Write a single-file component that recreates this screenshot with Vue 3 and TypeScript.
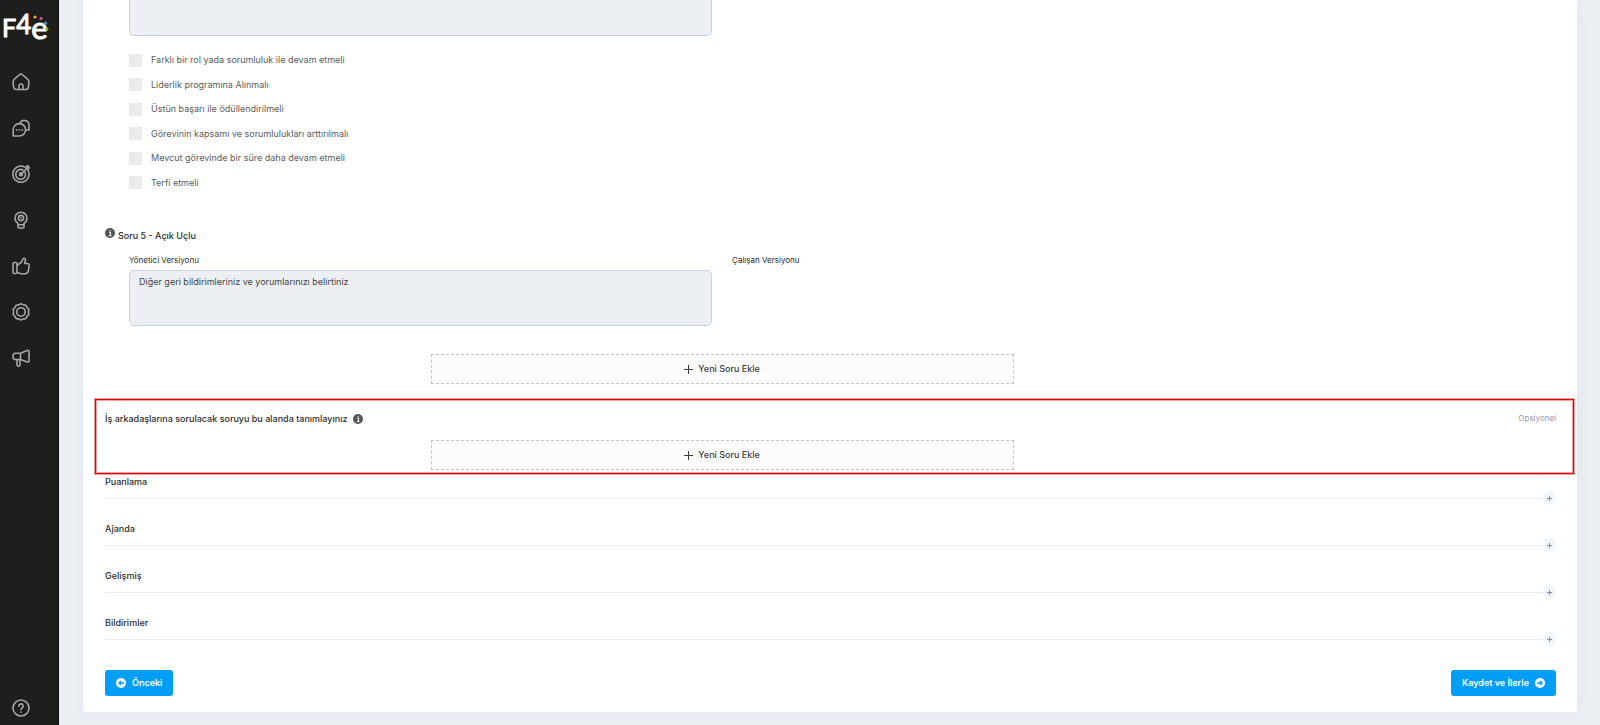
<script setup lang="ts">
import { ref } from 'vue'

interface NavItem {
  id: string
  label: string
}

interface Option {
  id: string
  label: string
}

const navItems: NavItem[] = [
  { id: 'home', label: 'Ana Sayfa' },
  { id: 'chat', label: 'Görüşmeler' },
  { id: 'target', label: 'Hedefler' },
  { id: 'idea', label: 'Gelişim' },
  { id: 'like', label: 'Takdir' },
  { id: 'badge', label: 'Rozetler' },
  { id: 'announce', label: 'Duyurular' },
]

const options: Option[] = [
  { id: 'role', label: 'Farklı bir rol yada sorumluluk ile devam etmeli' },
  { id: 'leadership', label: 'Liderlik programına Alınmalı' },
  { id: 'reward', label: 'Üstün başarı ile ödüllendirilmeli' },
  { id: 'scope', label: 'Görevinin kapsamı ve sorumlulukları arttırılmalı' },
  { id: 'continue', label: 'Mevcut görevinde bir süre daha devam etmeli' },
  { id: 'promotion', label: 'Terfi etmeli' },
]

const sections: string[] = ['Puanlama', 'Ajanda', 'Gelişmiş', 'Bildirimler']

const previousQuestion = ref('')
const openQuestion = ref('Diğer geri bildirimleriniz ve yorumlarınızı belirtiniz')
const selected = ref<string[]>([])
</script>

<template>
  <div class="layout">
    <aside class="sidebar">
      <a href="#" class="logo" aria-label="F4e">
        <span class="logo-f">F</span><span class="logo-4">4</span><span class="logo-e">e</span>
        <svg class="logo-dots" width="18" height="18" viewBox="0 0 18 18" aria-hidden="true">
          <circle cx="4" cy="3" r="1.600" fill="#f5a623" />
          <circle cx="10" cy="4.500" r="1.600" fill="#e0559b" />
          <circle cx="14.500" cy="9.200" r="1.600" fill="#4a90c8" />
          <circle cx="16" cy="15" r="1.600" fill="#6fb92c" />
        </svg>
      </a>
      <nav class="nav" aria-label="Menü">
        <a v-for="item in navItems" :key="item.id" href="#" class="nav-link" :aria-label="item.label">
          <svg class="nav-icon" viewBox="0 0 18 18">
            <template v-if="item.id === 'home'">
              <path d="M3.200 5.400 7.800 1.500q1.200-.9 2.400 0l4.600 3.900Q17 7 17 9l-.6 5q-.3 2.500-2.600 2.500H4.200Q1.900 16.500 1.600 14L1 9q0-2 2.200-3.600Z" />
              <path d="M7 16.500V13a2 2 0 0 1 4 0v3.500" />
            </template>
            <template v-else-if="item.id === 'chat'">
              <path d="M1.200 17V11A6.200 6.200 0 1 1 7.400 17Z" />
              <path d="M8 4.200A4.700 4.700 0 0 1 17 5.800V11H13.800" />
              <path d="M4.500 11h.4M7.300 11h.4M10.100 11h.4" />
            </template>
            <template v-else-if="item.id === 'target'">
              <path d="M12.600 2A8.100 8.100 0 1 0 16 5.300" />
              <path d="M10.900 5A4.900 4.900 0 1 0 13 7.100" />
              <circle cx="9" cy="9.200" r="1.500" />
              <path d="m9 9.200 5-5M14 4.200V2l2-1.500v2h1.600L16 4.200Z" />
            </template>
            <template v-else-if="item.id === 'idea'">
              <path d="M6 12.400a6 6 0 1 1 6 0V16q0 1-1 1H7q-1 0-1-1ZM6 13.800h6" />
              <circle cx="9" cy="7" r="2.600" />
              <path d="M9 6.900v.2" />
            </template>
            <template v-else-if="item.id === 'like'">
              <rect x="1" y="5.500" width="4" height="11" rx="1.300" />
              <path d="M5 8.500 9.500 5l1.700-3.300q1-1 2 .1.600 1-.1 2.700L12.600 6.500H15q2.300 0 2.200 2.200l-.8 5q-.5 3-3.400 3H8.500L5 15.200" />
            </template>
            <template v-else-if="item.id === 'badge'">
              <path d="m9 .8 2.300 1.100 2.600.3 1.100 2.300 1.900 1.800-.5 2.600.5 2.600-1.900 1.800-1.100 2.300-2.600.3L9 17l-2.300-1.100-2.600-.3L3 13.300l-1.900-1.800.5-2.600-.5-2.600L3 4.500l1.100-2.300 2.600-.3Z" />
              <circle cx="9" cy="8.900" r="4.200" />
            </template>
            <template v-else>
              <path d="M8.500 4.200 15.200 1.500q1.800-.4 1.800 1v9.400q0 1.400-1.800 1l-6.700-2.300H3.500q-2.500 0-2.500-2.500v-1.400q0-2.500 2.500-2.500ZM8.500 4.200v6.400" />
              <path d="M5 10.600V16q0 1.200 1.500 1.200T8 16v-5.200" />
            </template>
          </svg>
        </a>
      </nav>
      <a href="#" class="nav-link help" aria-label="Yardım">
        <svg class="nav-icon" viewBox="0 0 18 18">
          <circle cx="9" cy="9" r="8" />
          <path d="M6.800 7.200a2.200 2.200 0 1 1 3.300 1.800Q9 9.600 9 10.800M9 13v.3" />
        </svg>
      </a>
    </aside>

    <main class="content">
      <form class="card" @submit.prevent>
        <div class="questions">
          <div class="columns">
            <textarea v-model="previousQuestion" class="answer clipped" aria-label="Soru 4" readonly></textarea>
          </div>

          <div class="options">
            <label v-for="option in options" :key="option.id" class="option">
              <input v-model="selected" type="checkbox" class="box" :value="option.id" />
              <span>{{ option.label }}</span>
            </label>
          </div>
        </div>

        <h2 class="question-title">
          <svg class="info" viewBox="0 0 10 10" aria-hidden="true">
            <circle cx="5" cy="5" r="5" fill="#555" />
            <path d="M4 4.300h1.500v3M3.800 7.500h2.600M4.600 2.500h1" stroke="#fff" stroke-width="1.100" fill="none" />
          </svg>
          Soru 5 - Açık Uçlu
        </h2>

        <div class="questions">
          <div class="columns">
            <div class="version">
              <label for="manager-version">Yönetici Versiyonu</label>
              <textarea id="manager-version" v-model="openQuestion" class="answer" readonly></textarea>
            </div>
            <div class="version"><span>Çalışan Versiyonu</span></div>
          </div>
          <button type="button" class="add">
            <svg class="plus" viewBox="0 0 9 9" aria-hidden="true"><path d="M4.500 0v9M0 4.500h9" /></svg>
            Yeni Soru Ekle
          </button>
        </div>

        <section class="peer">
          <header class="peer-head">
            <h2 class="peer-title">
              İş arkadaşlarına sorulacak soruyu bu alanda tanımlayınız
              <svg class="info" viewBox="0 0 10 10" aria-hidden="true">
                <circle cx="5" cy="5" r="5" fill="#555" />
                <path d="M4 4.300h1.500v3M3.800 7.500h2.600M4.600 2.500h1" stroke="#fff" stroke-width="1.100" fill="none" />
              </svg>
            </h2>
            <span class="optional">Opsiyonel</span>
          </header>
          <div class="questions">
            <button type="button" class="add">
              <svg class="plus" viewBox="0 0 9 9" aria-hidden="true"><path d="M4.500 0v9M0 4.500h9" /></svg>
              Yeni Soru Ekle
            </button>
          </div>
        </section>

        <section v-for="name in sections" :key="name" class="fold">
          <h3 class="fold-title">{{ name }}</h3>
          <div class="fold-rule">
            <button type="button" class="fold-toggle" :aria-label="name + ' bölümünü aç'">
              <svg viewBox="0 0 5 5" aria-hidden="true"><path d="M2.500 0v5M0 2.500h5" /></svg>
            </button>
          </div>
        </section>

        <footer class="actions">
          <button type="button" class="primary">
            <svg class="arrow" viewBox="0 0 10 10" aria-hidden="true">
              <circle cx="5" cy="5" r="5" />
              <path d="M8 5H3M5 3 3 5l2 2" />
            </svg>
            Önceki
          </button>
          <button type="submit" class="primary">
            Kaydet ve İlerle
            <svg class="arrow" viewBox="0 0 10 10" aria-hidden="true">
              <circle cx="5" cy="5" r="5" />
              <path d="M2 5h5M5 3l2 2-2 2" />
            </svg>
          </button>
        </footer>
      </form>
    </main>
  </div>
</template>

<style>
body {
  background: #ecf0f5;
}
</style>

<style scoped>
.layout {
  display: flex;
  min-height: 100vh;
  font: 400 9px/12px Inter, "Liberation Sans", sans-serif;
  color: #2c2c2c;
}

.layout *,
.layout {
  box-sizing: border-box;
}

.sidebar {
  flex: none;
  width: 59px;
  display: flex;
  flex-direction: column;
  background: #1e1e1c;
  border-right: 1px solid #0b0b0b;
}

.logo {
  position: relative;
  display: flex;
  align-items: flex-end;
  height: 30px;
  margin: 12px 0 0 2px;
  color: #fff;
  font-family: Lato, sans-serif;
  line-height: 30px;
  text-decoration: none;
  -webkit-text-stroke: 1px #fff;
}

.logo-f {
  font-size: 25px;
}

.logo-4 {
  margin-bottom: 3px;
  font-size: 26px;
}

.logo-e {
  font-size: 31px;
}

.logo-dots {
  position: absolute;
  top: 2px;
  right: 9px;
}

.nav {
  display: flex;
  flex-direction: column;
  gap: 28px;
  margin-top: 31px;
}

.nav-link {
  display: block;
  height: 18px;
  margin-left: 12px;
}

.nav-icon {
  display: block;
  width: 18px;
  height: 18px;
  fill: none;
  stroke: #a6a6a4;
  stroke-width: 1.6;
  stroke-linecap: round;
  stroke-linejoin: round;
}

.help {
  margin-top: auto;
  margin-bottom: 8px;
}

.content {
  flex: 1;
  min-width: 0;
  padding: 0 23px 12px 24px;
}

.card {
  background: #fff;
  border-radius: 0 0 3px 3px;
  padding: 0 21px 16px 22px;
  box-shadow: 0 2px 16px rgba(40, 50, 80, 0.06);
}

.questions {
  width: 83.4%;
  padding-left: 24px;
}

.columns {
  display: grid;
  grid-template-columns: 1fr 1fr;
  gap: 20px;
}

.answer {
  display: block;
  width: 100%;
  height: 56px;
  padding: 5px 9px;
  resize: none;
  border: 1px solid #c9d1dd;
  border-radius: 5px;
  background: #ecf0f5;
  color: #444;
  font: inherit;
  outline: none;
}

.clipped {
  height: 36px;
  border-top: 0;
  border-radius: 0 0 5px 5px;
}

.options {
  display: grid;
  grid-auto-rows: 1fr;
  height: 147px;
  margin-top: 12px;
}

.option {
  display: flex;
  align-items: center;
  gap: 9px;
  color: #5c5c5c;
}

.box {
  appearance: none;
  flex: none;
  width: 13px;
  height: 13px;
  margin: 0;
  background: #ebebeb;
}

.box:checked {
  background: #009ef7;
}

h2,
h3 {
  margin: 0;
  font-size: 9px;
  line-height: 12px;
  font-weight: 500;
}

.question-title {
  display: flex;
  align-items: flex-end;
  gap: 3px;
  height: 14px;
  margin-top: 33px;
}

.question-title .info {
  align-self: flex-start;
}

.info {
  flex: none;
  width: 10px;
  height: 10px;
}

.version {
  font-size: 8px;
  line-height: 11px;
  margin-top: 13px;
}

.version label {
  display: block;
  margin-bottom: 4px;
}

.version .answer {
  font-size: 9px;
  line-height: 12px;
}

.add {
  display: flex;
  align-items: center;
  justify-content: center;
  gap: 5px;
  width: calc(50% - 10px);
  height: 30px;
  margin: 28px auto 0;
  padding: 0;
  border: 1px dashed #c4c4c4;
  background: #fcfcfc;
  color: #3c3c3c;
  font: inherit;
  font-weight: 500;
}

.plus {
  width: 9px;
  height: 9px;
  stroke: #3c3c3c;
  fill: none;
}

.peer {
  margin: 15px -18px 0 -10px;
  padding: 13px 17px 3px 9px;
  border: 1px solid #dd0000;
  box-shadow: 0 0 0 1px #f4a3a3, inset 0 0 0 1px #f4a3a3;
}

.peer-head {
  display: flex;
  justify-content: space-between;
}

.peer-title {
  display: flex;
  align-items: center;
  gap: 6px;
  font-weight: 550;
}

.optional {
  font-size: 8px;
  line-height: 10px;
  color: #9a9aa8;
}

.peer .add {
  margin-top: 15px;
}

.fold {
  margin-bottom: 16px;
}

.fold-title {
  padding-top: 2px;
}

.fold-rule {
  display: flex;
  align-items: center;
  height: 14px;
  margin-top: 3px;
}

.fold-rule::before {
  content: "";
  flex: 1;
  height: 1px;
  background: #ececec;
}

.fold-toggle {
  display: flex;
  align-items: center;
  justify-content: center;
  width: 13px;
  height: 14px;
  padding: 0;
  border: 0;
  border-radius: 50%;
  background: #f3f6f9;
}

.fold-toggle svg {
  width: 5px;
  height: 5px;
  stroke: #8a8a9c;
}

.actions {
  display: flex;
  justify-content: space-between;
  margin-top: 24px;
}

.primary {
  display: flex;
  align-items: center;
  gap: 6px;
  height: 26px;
  padding: 0 11px;
  border: 0;
  border-radius: 3px;
  background: #009ef7;
  color: #fff;
  font: inherit;
  font-weight: 600;
}

.arrow {
  width: 10px;
  height: 10px;
  fill: #fff;
}

.arrow path {
  fill: none;
  stroke: #009ef7;
  stroke-width: 1.4;
}
</style>
